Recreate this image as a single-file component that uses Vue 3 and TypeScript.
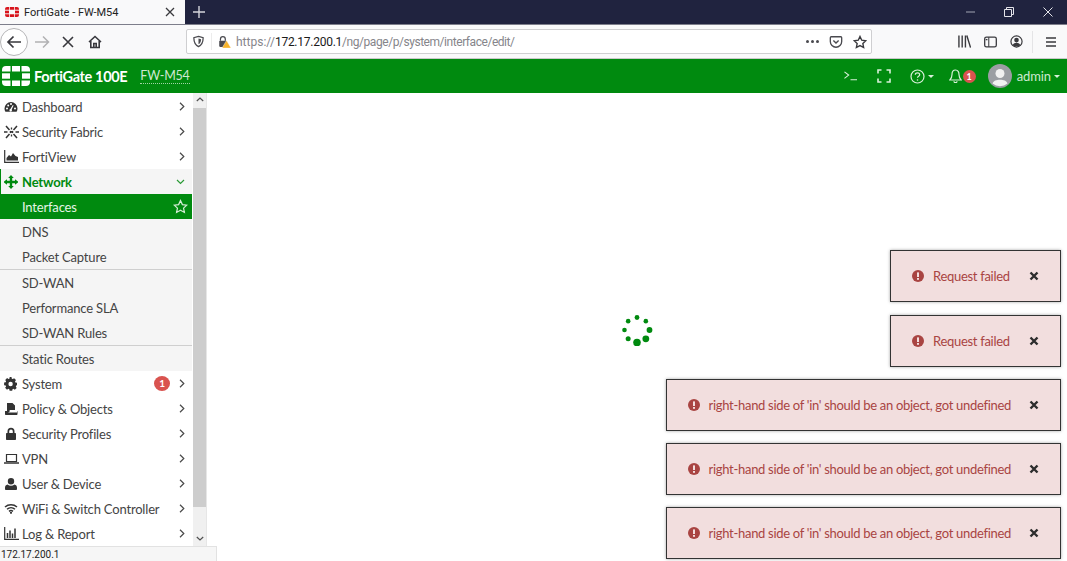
<script setup lang="ts">
interface NavItem {
  label: string;
  icon?: string;
  badge?: string;
  sub?: boolean;
  divider?: boolean;
  active?: boolean;
  open?: boolean;
}

const icons: Record<string, string> = {
  dashboard:
    'M7 2a6.5 6.5 0 0 0-6.5 6.5c0 1.2.3 2.3.9 3.2h11.2c.6-.9.9-2 .9-3.2A6.5 6.5 0 0 0 7 2zM3 9.4a1 1 0 1 1 0-2 1 1 0 0 1 0 2zm1.2-3a1 1 0 1 1 0-2 1 1 0 0 1 0 2zM7 4.900a1 1 0 1 1 0-2 1 1 0 0 1 0 2zm1 5.400a1.300 1.300 0 1 1-1.600-1.300l2.400-4 .8.4-1.900 4.100c.2.200.3.500.3.800zm3-.9a1 1 0 1 1 0-2 1 1 0 0 1 0 2z',
  network:
    'M7 0l2.800 3H8.200v2.800H11V4.200L14.500 7 11 9.800V8.200H8.200V11h1.600L7 14l-2.800-3h1.600V8.200H3v1.600L-.500 7 3 4.200v1.600h2.800V3H4.200z',
  gear:
    'M13 8.300V5.700l-1.600-.3-.4-1 1-1.300-1.900-1.900-1.300.9-1-.4L7.500.100H5.700l-.3 1.600-1 .4-1.300-1-1.900 1.900.9 1.300-.4 1-1.600.3v2.600l1.600.3.4 1-1 1.300 1.900 1.900 1.300-.9 1 .4.300 1.600h2.600l.3-1.600 1-.4 1.300 1 1.900-1.900-.9-1.300.4-1zM6.600 9.200a2.200 2.200 0 1 1 0-4.400 2.200 2.200 0 0 1 0 4.400z',
  policy:
    'M3 1h5.500L11 3.500V8H6.500c-.8 0-1 .5-1 1v1H3zM1 9h3.500v1.500h8.500V9l.5.500V12c0 .6-.4 1-1 1H2c-.6 0-1-.4-1-1z',
  lock:
    'M3.500 6V4.200a3.500 3.500 0 0 1 7 0V6h.5c.6 0 1 .4 1 1v5c0 .6-.4 1-1 1H3c-.6 0-1-.4-1-1V7c0-.6.4-1 1-1zm1.700 0h3.600V4.200a1.800 1.800 0 0 0-3.600 0z',
  user:
    'M7 1a3.200 3.200 0 1 1 0 6.400A3.200 3.200 0 0 1 7 1zM3.500 7.500C4.500 8.300 5.700 8.700 7 8.700s2.500-.4 3.500-1.200c1.500.3 2.500 1.500 2.500 3.200v1.200c0 .6-.5 1.100-1.100 1.100H2.100c-.6 0-1.100-.5-1.100-1.100v-1.200c0-1.700 1-2.900 2.500-3.200z',
};

const nav: NavItem[] = [
  { label: 'Dashboard', icon: 'dashboard' },
  { label: 'Security Fabric', icon: 'fabric' },
  { label: 'FortiView', icon: 'view' },
  { label: 'Network', icon: 'network', open: true },
  { label: 'Interfaces', sub: true, active: true },
  { label: 'DNS', sub: true },
  { label: 'Packet Capture', sub: true },
  { label: 'SD-WAN', sub: true, divider: true },
  { label: 'Performance SLA', sub: true },
  { label: 'SD-WAN Rules', sub: true },
  { label: 'Static Routes', sub: true, divider: true },
  { label: 'System', icon: 'gear', badge: '1' },
  { label: 'Policy & Objects', icon: 'policy' },
  { label: 'Security Profiles', icon: 'lock' },
  { label: 'VPN', icon: 'vpn' },
  { label: 'User & Device', icon: 'user' },
  { label: 'WiFi & Switch Controller', icon: 'wifi' },
  { label: 'Log & Report', icon: 'report' },
];

const inError = "right-hand side of 'in' should be an object, got undefined";
const toasts: string[] = ['Request failed', 'Request failed', inError, inError, inError];

// spinner dots clockwise from the top, growing towards the bottom
const dotSizes = [2.400, 2.300, 2.900, 3.400, 3.800, 2.500, 2.300, 2.300];
const dots = dotSizes.map((r, i) => {
  const a = (i * Math.PI) / 4;
  return { x: 16 + 12.500 * Math.sin(a), y: 16 - 12.500 * Math.cos(a), r };
});
</script>

<template>
  <div class="window">
    <div class="tabbar">
      <div class="tab">
        <svg class="favicon" width="14" height="10" viewBox="0 0 28 20">
          <g fill="#d8141c">
            <rect x="10" y="0" width="8" height="5.500" />
            <rect x="10" y="14.500" width="8" height="5.500" />
            <rect x="0" y="7.300" width="8" height="5.400" />
            <rect x="20" y="7.300" width="8" height="5.400" />
            <path d="M0 5.500V4a4 4 0 0 1 4-4h4.500v5.500zM28 5.500V4a4 4 0 0 0-4-4h-4.500v5.500zM0 14.500V16a4 4 0 0 0 4 4h4.500v-5.500zM28 14.500V16a4 4 0 0 1-4 4h-4.500v-5.500z" />
          </g>
        </svg>
        <span class="tab-title">FortiGate - FW-M54</span>
        <svg class="tab-close" width="10" height="10" viewBox="0 0 10 10">
          <path d="M1 1l8 8M9 1l-8 8" stroke="#3a3a3e" stroke-width="1.300" />
        </svg>
      </div>
      <svg class="newtab" width="12" height="12" viewBox="0 0 12 12">
        <path d="M6 0v12M0 6h12" stroke="#d4d5dc" stroke-width="1.400" />
      </svg>
      <div class="win-controls">
        <svg width="10" height="10" viewBox="0 0 10 10"><path d="M1 5h9" stroke="#8e90a0" stroke-width="1.200" /></svg>
        <svg width="10" height="10" viewBox="0 0 10 10">
          <path d="M.500 2.500h7v7h-7zM2.500 2.500v-2h7v7h-2" fill="none" stroke="#e4e4ea" />
        </svg>
        <svg width="10" height="10" viewBox="0 0 10 10"><path d="M.500.500l9 9M9.500.500l-9 9" stroke="#e4e4ea" /></svg>
      </div>
    </div>

    <div class="toolbar">
      <div class="back">
        <svg width="16" height="14" viewBox="0 0 16 14">
          <path d="M15 7H2M7.500 1.500L2 7l5.500 5.500" fill="none" stroke="#38383d" stroke-width="1.700" />
        </svg>
      </div>
      <svg class="tb-forward" width="15" height="14" viewBox="0 0 15 14">
        <path d="M0 7h13.500M8 1.500L13.500 7 8 12.500" fill="none" stroke="#b1b1b3" stroke-width="1.500" />
      </svg>
      <svg class="tb-stop" width="12" height="12" viewBox="0 0 12 12">
        <path d="M1 1l10 10M11 1L1 11" stroke="#38383d" stroke-width="1.600" />
      </svg>
      <svg class="tb-home" width="14" height="14" viewBox="0 0 14 14">
        <path d="M1 7l6-5.500L13 7M2.800 6v6.500h8.400V6M5.800 12.500V8.500h2.400v4" fill="none" stroke="#38383d" stroke-width="1.600" />
      </svg>
      <div class="urlbar">
        <svg class="shield" width="11" height="13" viewBox="0 0 13 14">
          <path d="M6.500 1L12 2.500c0 5-1.500 8.500-5.500 10.500C2.500 11 1 7.500 1 2.500z" fill="none" stroke="#4a4a4f" stroke-width="1.500" />
          <path d="M6.500 3.500L9.500 4.300c0 3-.8 4.700-3 6z" fill="#4a4a4f" />
        </svg>
        <span class="url-sep"></span>
        <svg class="lock" width="13" height="14" viewBox="0 0 16 15">
          <path d="M3 6V4a3 3 0 0 1 6 0v2" fill="none" stroke="#4a4a4f" stroke-width="1.500" />
          <rect x="1.500" y="6" width="9" height="7.500" rx="1" fill="#4a4a4f" />
          <path d="M10.500 5.500L16 15H5z" fill="#f7b32b" stroke="#fff" stroke-width=".5" />
        </svg>
        <span class="url">
          <span class="url-dim">https://</span><span class="url-host">172.17.200.1</span><span class="url-dim url-path">/ng/page/p/system/interface/edit/</span>
        </span>
        <span class="url-dots"><i></i><i></i><i></i></span>
        <svg width="14" height="14" viewBox="0 0 16 15">
          <path d="M2.500 1.500h11c.6 0 1 .4 1 1V7a6.500 6.500 0 0 1-13 0V2.500c0-.6.400-1 1-1z" fill="none" stroke="#4a4a4f" stroke-width="1.500" />
          <path d="M5 5.800L8 8.600l3-2.800" fill="none" stroke="#4a4a4f" stroke-width="1.600" />
        </svg>
        <svg class="url-star" width="14" height="14" viewBox="0 0 24 24">
          <path d="M12 2.500l3 6.400 7 .9-5.100 4.800 1.300 6.900-6.200-3.400-6.200 3.400 1.300-6.900L2 9.800l7-.9z" fill="none" stroke="#3a3a3e" stroke-width="2.400" />
        </svg>
      </div>
      <div class="tb-right">
        <svg width="13" height="13" viewBox="0 0 14 13">
          <path d="M1 0v13M4.500 0v13M8 0v13M9.500 0L13.500 13" stroke="#3a3a3e" stroke-width="1.500" fill="none" />
        </svg>
        <svg width="13" height="12" viewBox="0 0 15 13">
          <rect x=".8" y=".8" width="13.400" height="11.400" rx="2" fill="none" stroke="#3a3a3e" stroke-width="1.500" />
          <path d="M5.500 1v11" stroke="#3a3a3e" stroke-width="1.200" />
          <rect x="2" y="3" width="2" height="1.500" fill="#3a3a3e" />
        </svg>
        <svg width="13" height="13" viewBox="0 0 14 14">
          <circle cx="7" cy="7" r="6" fill="none" stroke="#3a3a3e" stroke-width="1.300" />
          <circle cx="7" cy="5.500" r="2.500" fill="#3a3a3e" />
          <path d="M2.800 11c1-2 2.500-2.700 4.200-2.700s3.200.7 4.200 2.700c-2 1.800-6.400 1.800-8.400 0z" fill="#3a3a3e" />
        </svg>
        <span class="tb-sep"></span>
        <svg width="10" height="10" viewBox="0 0 10 10">
          <path d="M0 1h10M0 5h10M0 9h10" stroke="#3a3a3e" stroke-width="1.500" />
        </svg>
      </div>
    </div>

    <header class="topbar">
      <svg class="logo" width="28" height="20" viewBox="0 0 28 20">
        <g fill="#fff">
          <rect x="10" y="0" width="8" height="5.500" />
          <rect x="10" y="14.500" width="8" height="5.500" />
          <rect x="0" y="7.300" width="8" height="5.400" />
          <rect x="20" y="7.300" width="8" height="5.400" />
          <path d="M0 5.500V4a4 4 0 0 1 4-4h4.500v5.500zM28 5.500V4a4 4 0 0 0-4-4h-4.500v5.500zM0 14.500V16a4 4 0 0 0 4 4h4.500v-5.500zM28 14.500V16a4 4 0 0 1-4 4h-4.500v-5.500z" />
        </g>
      </svg>
      <span class="product">FortiGate 100E</span>
      <span class="hostname">FW-M54</span>
      <div class="top-actions">
        <svg width="13" height="10" viewBox="0 0 14 10">
          <path d="M.500.500l4.500 3.500-4.500 3.500M7 9h7" fill="none" stroke="#d8f0da" stroke-width="1.200" />
        </svg>
        <svg class="ta-full" width="14" height="14" viewBox="0 0 14 14">
          <path d="M1 4.500V1h3.500M9.500 1H13v3.500M13 9.500V13H9.500M4.500 13H1V9.500" fill="none" stroke="#d8f0da" stroke-width="1.600" />
        </svg>
        <span class="ta-help">
          <svg width="15" height="15" viewBox="0 0 15 15">
            <circle cx="7.500" cy="7.500" r="6.500" fill="none" stroke="#d8f0da" stroke-width="1.200" />
            <path d="M5.300 5.800c0-1.300 1-2 2.200-2s2.200.8 2.200 1.900c0 1.500-2.200 1.500-2.200 3.100" fill="none" stroke="#d8f0da" stroke-width="1.200" />
            <circle cx="7.500" cy="11" r=".8" fill="#d8f0da" />
          </svg>
          <i class="caret"></i>
        </span>
        <span class="ta-bell">
          <svg width="13" height="14" viewBox="0 0 13 14">
            <path d="M6.500 1C4 1 3 3 3 5.500 3 8.500 2 10 .800 11h11.400C11 10 10 8.500 10 5.500 10 3 9 1 6.500 1zM5 12.200a1.500 1.500 0 0 0 3 0" fill="none" stroke="#d8f0da" stroke-width="1.200" />
          </svg>
          <b class="bell-badge">1</b>
        </span>
        <span class="avatar">
          <svg width="24" height="24" viewBox="0 0 24 24">
            <circle cx="12" cy="12" r="12" fill="#9b9ea3" />
            <circle cx="12" cy="9.500" r="4.500" fill="#f1f1f1" />
            <path d="M4.500 19.500c1-3 4-3.800 7.500-3.800s6.500.8 7.500 3.800a12 12 0 0 1-15 0z" fill="#f1f1f1" />
          </svg>
        </span>
        <span class="ta-user">admin</span>
        <i class="caret"></i>
      </div>
    </header>

    <div class="body">
      <aside class="sidebar">
        <nav class="nav">
          <a
            v-for="item in nav"
            :key="item.label"
            class="nav-item"
            :class="{ sub: item.sub, active: item.active, open: item.open, divider: item.divider }"
          >
            <span class="nav-icon">
              <svg v-if="item.icon && icons[item.icon]" width="14" height="14" viewBox="0 0 14 14">
                <path :d="icons[item.icon]" fill="currentColor" />
              </svg>
              <svg v-else-if="item.icon === 'fabric'" width="15" height="14" viewBox="0 0 15 14">
                <path d="M2 1l3.500 4M9.500 9L13 13M13 1L9.500 5M5.500 9L2 13M0 7h3.500M11.500 7H15" stroke="currentColor" stroke-width="1.500" fill="none" />
                <path d="M7.500 2.500v2M5.800 6.300l3.400 1.400M9.200 6.300L5.800 7.700M7.500 9.500v2" stroke="currentColor" stroke-width="1.300" fill="none" />
              </svg>
              <svg v-else-if="item.icon === 'view'" width="15" height="13" viewBox="0 0 15 13">
                <path d="M.700 0v12.300H15" fill="none" stroke="currentColor" stroke-width="1.200" />
                <path d="M2.500 10.500V8l2.500-3 2 1.500L9 3l2.500 3 2.500 1v3.500z" fill="currentColor" />
              </svg>
              <svg v-else-if="item.icon === 'vpn'" width="15" height="12" viewBox="0 0 15 12">
                <path d="M2.500 1.500h10v7h-10z" fill="none" stroke="currentColor" stroke-width="1.200" />
                <path d="M0 10h15" stroke="currentColor" stroke-width="1.500" />
              </svg>
              <svg v-else-if="item.icon === 'wifi'" width="14" height="11" viewBox="0 0 14 11">
                <path d="M1 4c3.400-3 8.600-3 12 0M3 6.200c2.300-2 5.700-2 8 0M5 8.300c1.200-1 2.800-1 4 0" fill="none" stroke="currentColor" stroke-width="1.500" />
                <circle cx="7" cy="9.800" r="1.100" fill="currentColor" />
              </svg>
              <svg v-else-if="item.icon === 'report'" width="15" height="13" viewBox="0 0 15 13">
                <path d="M.700 0v12.300H15" fill="none" stroke="currentColor" stroke-width="1.200" />
                <path d="M3.500 6v5M6 3.500V11M8.500 6.500V11M11 1.500V11" stroke="currentColor" stroke-width="1.500" />
              </svg>
            </span>
            <span class="nav-label">{{ item.label }}</span>
            <span v-if="item.badge" class="nav-badge">{{ item.badge }}</span>
            <svg v-if="item.active" class="nav-star" width="15" height="15" viewBox="0 0 24 24">
              <path d="M12 2.500l3 6.400 7 .9-5.100 4.800 1.300 6.900-6.200-3.400-6.200 3.400 1.300-6.900L2 9.800l7-.9z" fill="none" stroke="#d2ecd4" stroke-width="2" />
            </svg>
            <svg v-else-if="item.open" class="nav-chev" width="9" height="6" viewBox="0 0 9 6">
              <path d="M1 1l3.500 3.500L8 1" fill="none" stroke="#2a9a35" stroke-width="1.200" />
            </svg>
            <svg v-else-if="!item.sub" class="nav-chev" width="6" height="9" viewBox="0 0 6 9">
              <path d="M1 .800L4.800 4.500 1 8.200" fill="none" stroke="#4a4a4a" stroke-width="1.200" />
            </svg>
          </a>
        </nav>
        <div class="scrollbar">
          <svg width="8" height="5" viewBox="0 0 8 5"><path d="M.800 4L4 1l3.200 3" fill="none" stroke="#505050" stroke-width="1.200" /></svg>
          <div class="scroll-thumb"></div>
          <svg width="8" height="5" viewBox="0 0 8 5"><path d="M.800 1L4 4l3.200-3" fill="none" stroke="#505050" stroke-width="1.200" /></svg>
        </div>
      </aside>
      <main class="content">
        <svg class="spinner" width="32" height="32" viewBox="0 0 32 32">
          <circle v-for="(d, i) in dots" :key="i" :cx="d.x" :cy="d.y" :r="d.r" fill="#008a0f" />
        </svg>
      </main>
    </div>

    <div class="toasts">
      <div v-for="(t, i) in toasts" :key="i" class="toast">
        <svg class="toast-icon" width="12" height="12" viewBox="0 0 12 12">
          <circle cx="6" cy="6" r="6" fill="#a94442" />
          <rect x="5" y="2.400" width="2" height="4.600" fill="#f2dede" />
          <rect x="5" y="8" width="2" height="1.800" fill="#f2dede" />
        </svg>
        <span class="toast-text">{{ t }}</span>
        <svg class="toast-close" width="10" height="10" viewBox="0 0 10 10">
          <path d="M1.500 1.500l7 7M8.500 1.500l-7 7" stroke="#2d2d2d" stroke-width="2.400" />
        </svg>
      </div>
    </div>

    <div class="status">172.17.200.1</div>
  </div>
</template>

<style>
html,
body {
  margin: 0;
  height: 100%;
  overflow: hidden;
  background: #fff;
}
</style>

<style scoped>
.window {
  position: relative;
  width: 1067px;
  height: 561px;
  overflow: hidden;
  display: flex;
  flex-direction: column;
  font-family: Lato, 'Open Sans', sans-serif;
  color: #333;
}

.tabbar {
  height: 24px;
  background: #20233f;
  display: flex;
  align-items: center;
  flex-shrink: 0;
}

.tab {
  width: 185px;
  height: 24px;
  background: #f9f9fa;
  display: flex;
  align-items: center;
  padding: 0 6px 0 5px;
  box-sizing: border-box;
  font-family: Roboto, sans-serif;
  font-size: 11px;
  color: #222;
}

.favicon {
  margin-right: 5px;
}

.tab-title {
  flex: 1;
}

.tab-close {
  margin-right: 4px;
}

.newtab {
  margin-left: 8px;
}

.win-controls {
  margin-left: auto;
  display: flex;
  gap: 29px;
  padding-right: 14px;
}

.toolbar {
  height: 33px;
  background: #f9f9fa;
  border-top: 1px solid #7d7e8b;
  border-bottom: 1px solid #c9c9c9;
  box-sizing: content-box;
  display: flex;
  align-items: center;
  flex-shrink: 0;
}

.back {
  width: 28px;
  height: 28px;
  border: 1px solid #b5b5b7;
  border-radius: 50%;
  background: #fff;
  display: flex;
  align-items: center;
  justify-content: center;
  box-sizing: border-box;
}

.tb-forward {
  margin-left: 7px;
}

.tb-stop {
  margin-left: 12px;
}

.tb-home {
  margin-left: 14px;
}

.urlbar {
  width: 686px;
  height: 25px;
  margin-left: 84px;
  background: #fff;
  border: 1px solid #cfcfd1;
  border-radius: 2px;
  box-sizing: border-box;
  display: flex;
  align-items: center;
  padding: 0 4px 0 6px;
}

.url-sep {
  width: 1px;
  height: 17px;
  background: #ececec;
  margin: 0 6px 0 7px;
}

.lock {
  margin-right: 5px;
}

.url {
  flex: 1;
  font-family: Roboto, sans-serif;
  font-size: 12px;
  white-space: nowrap;
}

.url-dim {
  color: #85858a;
}

.url-path {
  letter-spacing: -0.45px;
}

.url-host {
  color: #1a1a1a;
  letter-spacing: -0.25px;
}

.url-dots {
  display: flex;
  gap: 2px;
  margin-right: 10px;
}

.url-dots i {
  width: 3px;
  height: 3px;
  border-radius: 50%;
  background: #4a4a4f;
}

.url-star {
  margin-left: 10px;
}

.tb-right {
  margin-left: auto;
  display: flex;
  align-items: center;
  gap: 13px;
  padding-right: 11px;
}

.tb-sep {
  width: 1px;
  height: 22px;
  background: #e4e4e6;
  margin-left: -4px;
}

.topbar {
  height: 34px;
  background: #008a0f;
  display: flex;
  align-items: center;
  padding-left: 2px;
  color: #fff;
  flex-shrink: 0;
}

.product {
  margin-left: 4px;
  font-size: 14.500px;
  font-weight: 700;
  letter-spacing: -0.35px;
}

.hostname {
  margin-left: 13px;
  font-size: 12.500px;
  letter-spacing: -0.2px;
  color: #cfe8d2;
  border-bottom: 1px dotted #9fd3a5;
  line-height: 15px;
}

.top-actions {
  margin-left: auto;
  display: flex;
  align-items: center;
  padding-right: 7px;
  color: #cde9cf;
}

.ta-full {
  margin-left: 20px;
}

.ta-help {
  margin-left: 19px;
  display: flex;
  align-items: center;
  gap: 3px;
}

.caret {
  width: 0;
  height: 0;
  border-left: 3px solid transparent;
  border-right: 3px solid transparent;
  border-top: 3px solid #d8f0da;
}

.ta-bell {
  margin-left: 15px;
  display: flex;
  align-items: center;
}

.bell-badge {
  width: 13px;
  height: 13px;
  margin-left: 1px;
  border-radius: 50%;
  background: #d9534f;
  color: #fff;
  font-size: 9px;
  line-height: 13px;
  text-align: center;
}

.avatar {
  margin-left: 12px;
  width: 24px;
  height: 24px;
  display: flex;
}

.ta-user {
  margin-left: 5px;
  margin-right: 3px;
  font-size: 13px;
  letter-spacing: -0.1px;
}

.body {
  flex: 1;
  display: flex;
  min-height: 0;
  padding-bottom: 15px;
}

.sidebar {
  width: 206px;
  display: flex;
  flex-shrink: 0;
  border-right: 1px solid #e6e6e6;
  box-sizing: content-box;
}

.nav {
  width: 192px;
  display: flex;
  flex-direction: column;
  padding-top: 1px;
}

.nav-item {
  height: 25px;
  flex-shrink: 0;
  display: flex;
  align-items: center;
  padding: 0 6px 0 4px;
  font-size: 13px;
  letter-spacing: -0.18px;
  color: #444;
  box-sizing: border-box;
}

.nav-item.sub {
  background: #f5f5f5;
  padding-left: 22px;
}

.nav-item.sub .nav-icon {
  display: none;
}

.nav-item.divider {
  height: 26px;
  border-top: 1px solid #cfcfcf;
}

.nav-item.open {
  background: #f5f5f5;
  color: #008a0f;
  font-weight: 700;
  border-left: 1px solid #008a0f;
  padding-left: 3px;
}

.nav-item.active {
  background: #008a0f;
  color: #e4f4e6;
}

.nav-icon {
  width: 18px;
  display: flex;
  align-items: center;
  flex-shrink: 0;
  color: #333;
}

.nav-item.open .nav-icon {
  color: #008a0f;
}

.nav-label {
  flex: 1;
  white-space: nowrap;
}

.nav-chev {
  margin-right: 1px;
}

.nav-badge {
  width: 16px;
  height: 15px;
  margin-right: 9px;
  border-radius: 50%;
  background: #d9534f;
  color: #fff;
  font-size: 10px;
  font-weight: 700;
  line-height: 15px;
  text-align: center;
}

.nav-star {
  margin-right: -2px;
}

.scrollbar {
  width: 14px;
  background: #f0f0f0;
  border-left: 1px solid #fff;
  display: flex;
  flex-direction: column;
  align-items: center;
  padding: 4px 0 5px;
  box-sizing: border-box;
}

.scroll-thumb {
  align-self: stretch;
  height: 399px;
  margin-top: 6px;
  margin-bottom: auto;
  background: #cdcdcd;
}

.content {
  flex: 1;
  display: flex;
  align-items: center;
  justify-content: center;
  background: #fff;
}

.spinner {
  margin-top: 20px;
}

.toasts {
  position: absolute;
  top: 250.400px;
  right: 6px;
  display: flex;
  flex-direction: column;
  align-items: flex-end;
  gap: 12.250px;
}

.toast {
  height: 52px;
  min-width: 171px;
  padding: 0 21px;
  background: #f2dede;
  border: 1px solid #333;
  box-shadow: 0 0 3px rgba(0, 0, 0, 0.35);
  box-sizing: border-box;
  display: flex;
  align-items: center;
  color: #a94442;
  font-size: 13px;
  letter-spacing: -0.3px;
}

.toast-icon {
  margin-right: 9px;
}

.toast-text {
  flex: 1;
}

.toast-close {
  margin-left: 18px;
}

.status {
  position: absolute;
  left: 0;
  bottom: 0;
  width: 217px;
  height: 15px;
  background: #f6f6f6;
  border-top: 1px solid #e2e2e2;
  border-right: 1px solid #e2e2e2;
  box-sizing: border-box;
  padding-left: 1px;
  font-family: Roboto, sans-serif;
  font-size: 10px;
  line-height: 15px;
  color: #222;
}
</style>
